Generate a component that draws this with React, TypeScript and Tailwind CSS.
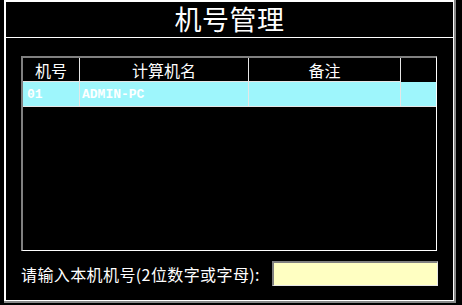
const rows = [{ id: "01", name: "ADMIN-PC", note: "" }];

const cjk = "font-['Noto_Sans_CJK_SC','Noto_Sans',sans-serif]";

export default function App() {
  return (
    <div className={`w-[462px] h-[305px] bg-black ${cjk} text-white overflow-hidden`}>
      {/* window frame */}
      <div className="ml-1 w-[452px] h-[303px] border-r-2 border-b-2 border-[#8a8a8a]">
        <div className="h-full flex flex-col border-l-2 border-t-2 border-r border-b border-white">
          {/* title */}
          <div className="h-[36px] shrink-0 border-b border-white flex items-center justify-center">
            <span className="text-[27px] leading-none tracking-[0.5px] -mt-[2px]">机号管理</span>
          </div>

          {/* body */}
          <div className="flex-1 flex flex-col pl-[15px] pt-[18px]">
            {/* list */}
            <div className="w-[416px] h-[195px] flex flex-col border-t-2 border-l-2 border-[#808080] border-r border-b border-r-white border-b-white">
              <div className="h-[24px] flex text-[16px] leading-none">
                <div className="w-[57px] border-r border-b border-[#e6e6e6] flex items-center justify-center">机号</div>
                <div className="w-[169px] border-r border-b border-[#e6e6e6] flex items-center justify-center">计算机名</div>
                <div className="w-[152px] border-r border-b border-[#e6e6e6] flex items-center justify-center">备注</div>
                <div className="flex-1" />
              </div>
              {rows.map((r) => (
                <div
                  key={r.id}
                  className="h-[25px] flex bg-[#9ef6fc] border-b border-[#e6e6e6] font-['Liberation_Mono',monospace] font-bold text-[13px] leading-none"
                >
                  <div className="w-[57px] border-r border-[#e6e6e6] flex items-center pl-[4px]">{r.id}</div>
                  <div className="w-[169px] border-r border-[#e6e6e6] flex items-center pl-[2px]">{r.name}</div>
                  <div className="w-[152px] border-r border-[#e6e6e6] flex items-center">{r.note}</div>
                  <div className="flex-1" />
                </div>
              ))}
            </div>

            {/* input line */}
            <div className="mt-[10px] flex items-center">
              <span className="w-[251px] text-[16px] leading-none tracking-[0.4px]">请输入本机机号(2位数字或字母):</span>
              <div className="w-[166px] h-[25px] bg-[#ffffc2] border-t-2 border-l-2 border-[#808080] border-r border-b border-r-[#e6e6e6] border-b-[#e6e6e6]" />
            </div>
          </div>
        </div>
      </div>
    </div>
  );
}
